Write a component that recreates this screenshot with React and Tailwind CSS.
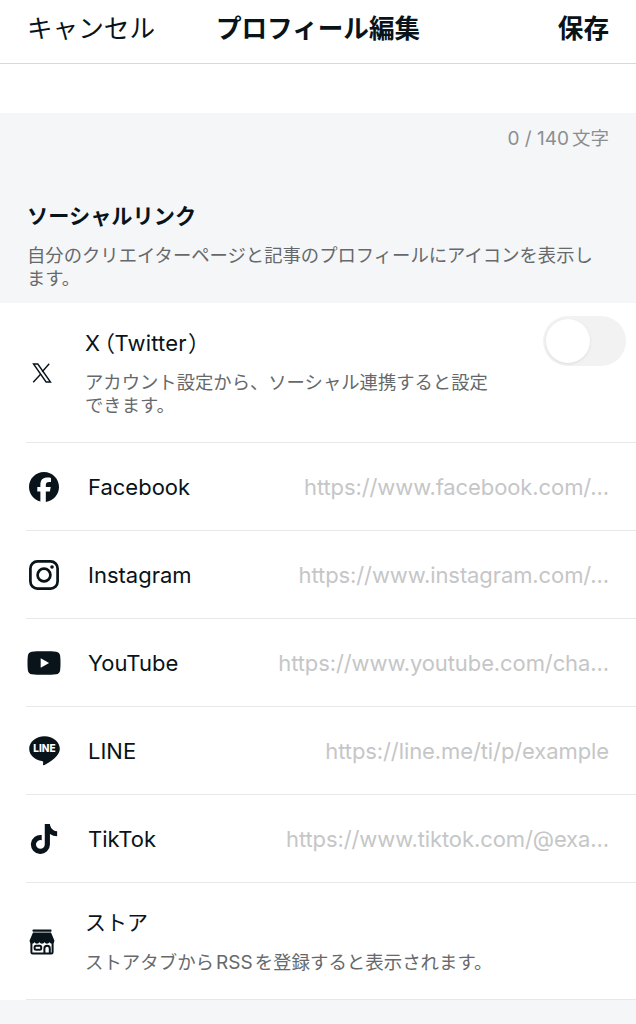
import { useState } from "react";
import { FaFacebook, FaTiktok } from "react-icons/fa6";

function XIcon() {
  return (
    <svg width="20" height="20" viewBox="0 0 20 20" fill="none" stroke="currentColor" strokeWidth="1.4">
      <path d="M1.5 1h4.3l12.7 18h-4.4z" />
      <path d="M17.2 .8l-7 8M8.6 11.2L1.2 19.2" />
    </svg>
  );
}

function InstagramIcon() {
  return (
    <svg width="30" height="30" viewBox="0 0 30 30" fill="none" stroke="currentColor" strokeWidth="2.7">
      <rect x="1.4" y="1.4" width="27.2" height="27.2" rx="7" />
      <circle cx="15" cy="15" r="6.4" />
      <circle cx="23" cy="7" r="1.8" fill="currentColor" stroke="none" />
    </svg>
  );
}

function YoutubeIcon() {
  return (
    <svg width="34" height="24" viewBox="0 0 34 24">
      <path
        fill="currentColor"
        d="M17 .3c-5 0-9.500.1-12.200.5C2.500 1.100 1.300 2.400.9 4.600.5 7 .5 9.500.5 12s0 5 .4 7.400c.4 2.200 1.600 3.500 3.900 3.800 2.700.4 7.200.5 12.200.5s9.500-.1 12.200-.5c2.300-.3 3.500-1.600 3.900-3.800.4-2.400.4-4.900.4-7.400s0-5-.4-7.400c-.4-2.200-1.600-3.500-3.900-3.800C26.500.4 22 .3 17 .3z"
      />
      <path fill="#fff" d="M13.700 7.200v9.600l8.400-4.800z" />
    </svg>
  );
}

function LineIcon() {
  return (
    <svg width="31" height="30" viewBox="0 0 31 30">
      <path
        fill="currentColor"
        d="M15.500.3C7 .3.200 5.900.200 12.800c0 6.200 5.400 11.300 12.700 12.300.9.200 1.300.6 1.300 1.400l-.2 1.700c-.1.900.5 1.300 1.400.8 3.300-1.800 9.200-5.300 12.500-9.300 1.900-2.100 2.900-4.400 2.900-6.900C30.800 5.900 24 .3 15.500.3z"
      />
      <text
        x="15.500"
        y="16.400"
        fill="#fff"
        fontFamily="Inter, sans-serif"
        fontWeight="800"
        fontSize="10"
        textAnchor="middle"
      >
        LINE
      </text>
    </svg>
  );
}

function StoreIcon() {
  return (
    <svg width="26" height="26" viewBox="0 0 26 26">
      <rect x="3.500" y=".5" width="19" height="2.200" rx=".7" fill="currentColor" />
      <path
        fill="currentColor"
        d="M4 3.600h18l3.400 7.900c0 1.900-1 3.200-2.400 3.200s-2-.7-2.500-1.600c-.5.900-1.300 1.600-2.500 1.600s-2-.7-2.500-1.600c-.5.900-1.300 1.600-2.500 1.600s-2-.7-2.500-1.600C10 14 9.200 14.700 8 14.700s-2-.7-2.500-1.600C5 14 4.400 14.700 3 14.700S.6 13.400.6 11.500z"
      />
      <g fill="none" stroke="currentColor" strokeWidth="2">
        <path d="M2.400 13v10.300c0 .8.400 1.200 1.200 1.200h18.800c.8 0 1.200-.4 1.200-1.200V13" />
        <rect x="5.600" y="16.700" width="6.600" height="4" rx="1.500" />
        <path d="M15.400 24.500v-5c0-3.600 5.400-3.600 5.400 0v5" />
      </g>
    </svg>
  );
}

const links = [
  { name: "Facebook", icon: <FaFacebook size={30} />, placeholder: "https://www.facebook.com/..." },
  { name: "Instagram", icon: <InstagramIcon />, placeholder: "https://www.instagram.com/..." },
  { name: "YouTube", icon: <YoutubeIcon />, placeholder: "https://www.youtube.com/cha..." },
  { name: "LINE", icon: <LineIcon />, placeholder: "https://line.me/ti/p/example" },
  { name: "TikTok", icon: <FaTiktok size={30} className="mr-px" />, placeholder: "https://www.tiktok.com/@exa..." },
];

export default function App() {
  const [connected, setConnected] = useState(false);

  return (
    <div className="flex min-h-screen flex-col overflow-hidden bg-[#f5f6f8] font-[Inter,'Noto_Sans_CJK_JP',sans-serif] text-[#08131a]">
      {/* Header */}
      <header className="grid h-16 grid-cols-3 items-center border-b border-[#d8d9da] bg-white px-[27px] pb-[5px] text-[25.6px]">
        <button className="justify-self-start whitespace-nowrap">キャンセル</button>
        <h1 className="justify-self-center whitespace-nowrap font-bold">プロフィール編集</h1>
        <button className="justify-self-end whitespace-nowrap font-bold">保存</button>
      </header>
      <div className="h-[49px] bg-white" />

      {/* Section intro */}
      <section className="h-[190px] px-[27px] pt-3">
        <p className="text-right text-[18.5px] leading-[26px] text-[#8b8e91]">
          <span className="mr-[3px] text-[19px]">0 / 140</span>文字
        </p>
        <h2 className="mt-[48px] text-[21.2px] leading-8 font-bold">ソーシャルリンク</h2>
        <p className="mt-[12px] text-[18.33px] leading-[23px] whitespace-nowrap text-[#65696c]">
          自分のクリエイターページと記事のプロフィールにアイコンを表示し
          <br />
          ます。
        </p>
      </section>

      <main className="bg-white pl-[26px]">
        <div className="flex h-[140px] border-b border-[#e8e8e9]">
          <div className="flex w-[59px] items-center pl-[6px]">
            <XIcon />
          </div>
          <div className="flex-1 pt-6">
            <h3 className="text-[22px] leading-8 tracking-[0.2px] [font-feature-settings:'palt']">
              X<span className="ml-[3px]">（</span>Twitter<span className="ml-[2px]">）</span>
            </h3>
            <p className="mt-[12px] text-[18.33px] leading-[23px] whitespace-nowrap text-[#65696c]">
              アカウント設定から、ソーシャル連携すると設定
              <br />
              できます。
            </p>
          </div>
          <button
            role="switch"
            aria-checked={connected}
            aria-label="X（Twitter）"
            onClick={() => setConnected(!connected)}
            className={`mt-[13px] mr-[10px] flex h-[50px] w-[83px] items-center rounded-full p-[3px] ${connected ? "justify-end bg-[#08131a]" : "bg-[#f2f2f2]"}`}
          >
            <span className="size-[44px] rounded-full bg-white shadow-[0_1px_3px_rgba(0,0,0,0.09)]" />
          </button>
        </div>

        {links.map((link) => (
          <label key={link.name} className="flex h-[88px] items-center border-b border-[#e8e8e9] pr-[27px] text-[22px]">
            <span className="flex w-9 shrink-0 justify-center">{link.icon}</span>
            <span className="ml-[26px] pt-0.5">{link.name}</span>
            <input
              className="min-w-0 flex-1 pt-0.5 text-right tracking-[-0.1px] outline-none placeholder:text-[#c5c6c7]"
              placeholder={link.placeholder}
            />
          </label>
        ))}

        <div className="flex h-[117px] border-b border-[#e8e8e9]">
          <div className="flex w-[59px] items-center pt-px pl-[3px]">
            <StoreIcon />
          </div>
          <div className="pt-6">
            <h3 className="text-[21px] leading-8">ストア</h3>
            <p className="mt-[12px] text-[18.45px] leading-[23px] whitespace-nowrap text-[#65696c]">
              ストアタブから<span className="mx-[2px] text-[19px]">RSS</span>を登録すると表示されます。
            </p>
          </div>
        </div>
      </main>
    </div>
  );
}
